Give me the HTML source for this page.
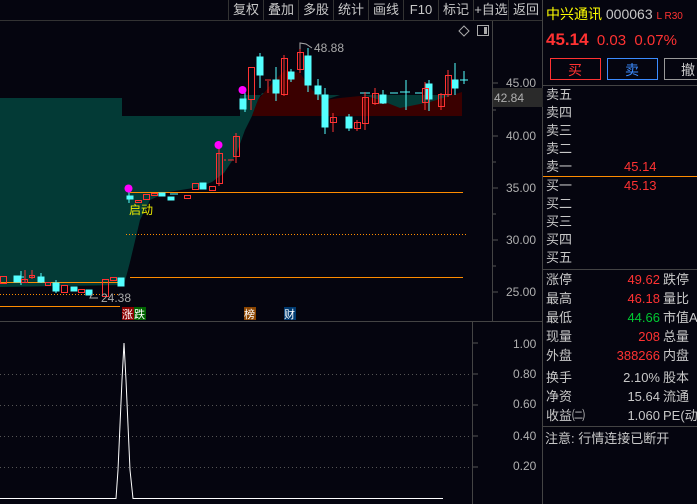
<!DOCTYPE html>
<html><head><meta charset="utf-8"><style>
*{margin:0;padding:0}
body{width:697px;height:504px;background:#05050f;overflow:hidden;position:relative;font-family:"Liberation Sans","Noto Sans CJK SC",sans-serif;}
.tb{position:absolute;top:0;height:20px;font-size:13px;color:#c8c8c8;line-height:20px;text-align:center;border-left:1px solid #333;}
.r{position:absolute;font-size:13px;line-height:18px;color:#c8c8c8;}
</style></head><body>
<svg width="697" height="504" style="position:absolute;left:0;top:0" font-family="Liberation Sans,Noto Sans CJK SC,sans-serif">
<line x1="0" y1="20.5" x2="543" y2="20.5" stroke="#333"/>
<path d="M0 98 H122 V116 H240 V95 H257 L262 95 H462 V116 H430 L400 112 L380 100 L362 95 L340 95 L325 100 L300 93 H262 L258 100 L252 116 L245 130 L236 155 L224 173 L212 182 L200 187 L168 192 L150 200 L140 220 L130 262 L124 285 L0 287 Z" fill="#033a36"/>
<path d="M262 95 L275 80 L285 70 L300 73 L312 90 L325 100 L340 98 L360 96 L380 100 L400 108 L430 102 L462 92 V116 H252 L258 100 Z" fill="#3a0000"/>
<line x1="130" y1="192.5" x2="463" y2="192.5" stroke="#ff8c00"/>
<line x1="126" y1="234.5" x2="467" y2="234.5" stroke="#ff8c00" stroke-dasharray="1,2"/>
<line x1="130" y1="277.5" x2="463" y2="277.5" stroke="#ff8c00"/>
<line x1="0" y1="282.5" x2="120" y2="282.5" stroke="#ff8c00"/>
<line x1="0" y1="294.5" x2="118" y2="294.5" stroke="#ff8c00" stroke-dasharray="1,2"/>
<line x1="0" y1="306.5" x2="120" y2="306.5" stroke="#ff8c00"/>
<g fill="#54ffff" stroke="#54ffff">
<rect x="14" y="276" width="6" height="6"/><rect x="38" y="277" width="6" height="5"/>
<rect x="53" y="283" width="6" height="8"/><rect x="71" y="287" width="6" height="4"/><rect x="86" y="290" width="6" height="5"/><rect x="118" y="278" width="6" height="8"/>
<rect x="127" y="196" width="6" height="3"/><rect x="159" y="193" width="6" height="3"/><rect x="168" y="197" width="6" height="3"/><rect x="200" y="183" width="6" height="6"/>
<rect x="240" y="99" width="6" height="10"/><rect x="257" y="57" width="6" height="18"/><rect x="273" y="80" width="6" height="13"/><rect x="288" y="72" width="6" height="7"/><rect x="305" y="56" width="6" height="29"/><rect x="315" y="86" width="6" height="8"/><rect x="322" y="95" width="6" height="32"/><rect x="346" y="117" width="6" height="11"/><rect x="380" y="95" width="6" height="8"/><rect x="426" y="84" width="6" height="15"/><rect x="452" y="80" width="6" height="8"/>
<path d="M21 271V285M41 273V283M56 280V293M129 190V203M245 90V112M260 53V88M276 67V101M291 69V82M308 48V92M318 79V100M325 88V134M349 114V131M383 90V104M406 80V110M429 80V111M455 63V95M464 71V84M18 277H24M460 80H468M400 92H410M390 93H398M360 93H370M415 93H422M170 194H178"/>
</g>
<g fill="none" stroke="#ff3232">
<rect x="0.5" y="276.5" width="6" height="7"/><rect x="21.5" y="279.5" width="6" height="3"/><rect x="29.5" y="275.5" width="5" height="2"/><rect x="45.5" y="282.5" width="5" height="3"/><rect x="61.5" y="285.5" width="6" height="7"/><rect x="78.5" y="289.5" width="6" height="3"/><rect x="102.5" y="279.5" width="6" height="17"/><rect x="110.5" y="277.5" width="6" height="3"/>
<rect x="135.5" y="200.5" width="6" height="2"/><rect x="143.5" y="194.5" width="6" height="5"/><rect x="151.5" y="193.5" width="6" height="2"/><rect x="184.5" y="195.5" width="6" height="3"/><rect x="192.5" y="183.5" width="6" height="6"/><rect x="209.5" y="186.5" width="6" height="4"/>
<rect x="216.5" y="153.5" width="6" height="30"/><rect x="233.5" y="136.5" width="6" height="20"/><rect x="248.5" y="67.5" width="6" height="32"/><rect x="281.5" y="58.5" width="6" height="36"/><rect x="297.5" y="52.5" width="6" height="17"/><rect x="330.5" y="117.5" width="6" height="5"/><rect x="354.5" y="122.5" width="6" height="6"/><rect x="362.5" y="97.5" width="6" height="26"/><rect x="372.5" y="93.5" width="6" height="10"/><rect x="422.5" y="88.5" width="6" height="14"/><rect x="438.5" y="94.5" width="6" height="12"/><rect x="445.5" y="75.5" width="6" height="19"/>
<path d="M25 270V283M32 270V279M219 145V186M236 133V163M251 99V110M284 55V96M300 44V73M333 113V132M357 120V131M365 92V130M375 88V105M425 82V110M441 93V110M448 70V97M268 81V93M265 80H271M228 160H234M224 160H226"/>
</g>
<path d="M92 294 L90 298 L98 298" stroke="#aaa" fill="none"/>
<text x="101" y="302" fill="#aaa" font-size="12">24.38</text>
<path d="M300 49 V43 L306 44 L312 48" stroke="#aaa" fill="none"/>
<text x="314" y="52" fill="#aaa" font-size="12">48.88</text>
<g fill="#ff00ff"><circle cx="128.5" cy="188.5" r="4"/><circle cx="218.5" cy="145" r="4"/><circle cx="242.5" cy="90" r="4"/></g>
<text x="129" y="214" fill="#e8e800" font-size="12">启动</text>
<path d="M464 26 L469 31 L464 36 L459 31 Z" stroke="#aaa" fill="none"/>
<rect x="477.5" y="25.5" width="11" height="10" stroke="#aaa" fill="none"/><rect x="484" y="27" width="3" height="7" fill="#aaa"/>
<rect x="122" y="307" width="12" height="13" fill="#8b0000"/><text x="122" y="318" fill="#fff" font-size="11">涨</text>
<rect x="134" y="307" width="12" height="13" fill="#006400"/><text x="134" y="318" fill="#fff" font-size="11">跌</text>
<rect x="244" y="307" width="12" height="13" fill="#8b4500"/><text x="244" y="318" fill="#fff" font-size="11">榜</text>
<rect x="284" y="307" width="12" height="13" fill="#003a70"/><text x="284" y="318" fill="#fff" font-size="11">财</text>
<line x1="492.5" y1="21" x2="492.5" y2="321" stroke="#444"/>
<line x1="0" y1="321.5" x2="543" y2="321.5" stroke="#444"/>
<line x1="472.5" y1="322" x2="472.5" y2="504" stroke="#444"/>
<line x1="542.5" y1="0" x2="542.5" y2="504" stroke="#444"/>
<g fill="#b0b0b0" font-size="12">
<text x="506" y="87">45.00</text><text x="506" y="140">40.00</text><text x="506" y="192">35.00</text><text x="506" y="244">30.00</text><text x="506" y="296">25.00</text>
<text x="513" y="348">1.00</text><text x="513" y="378">0.80</text><text x="513" y="408">0.60</text><text x="513" y="440">0.40</text><text x="513" y="470">0.20</text>
</g>
<g stroke="#555"><path d="M493 83H498M493 136H498M493 188H498M493 240H498M493 292H498M493 110H496M493 162H496M493 214H496M493 266H496M473 343H478M473 374H478M473 405H478M473 436H478M473 467H478"/></g>
<rect x="493" y="88" width="50" height="19" fill="#2a2a2a"/>
<text x="494" y="102" fill="#b0b0b0" font-size="12">42.84</text>
<g stroke="#555" stroke-dasharray="1,3"><path d="M0 374.5H472M0 405.5H472M0 436.5H472M0 467.5H472"/></g>
<path d="M0 498.5 H116 L118 470 L122 380 L124 343 L126 380 L130 470 L133 498.5 H443" stroke="#fff" fill="none"/>
<g stroke="#444"><path d="M543 85.5H697M543 269.5H697M543 426.5H697"/></g>
<line x1="543" y1="176.5" x2="697" y2="176.5" stroke="#ff8c00"/>
<rect x="550.5" y="58.5" width="50" height="21" stroke="#ff3232" fill="none"/>
<rect x="607.5" y="58.5" width="50" height="21" stroke="#3c8cff" fill="none"/>
<rect x="664.5" y="58.5" width="50" height="21" stroke="#999" fill="none"/>
<text x="568" y="75" fill="#ff3232" font-size="14">买</text>
<text x="625" y="75" fill="#3c8cff" font-size="14">卖</text>
<text x="681" y="75" fill="#ccc" font-size="14">撤</text>
</svg>
<div class="tb" style="left:228px;width:34px">复权</div>
<div class="tb" style="left:263px;width:34px">叠加</div>
<div class="tb" style="left:298px;width:34px">多股</div>
<div class="tb" style="left:333px;width:34px">统计</div>
<div class="tb" style="left:368px;width:34px">画线</div>
<div class="tb" style="left:403px;width:34px">F10</div>
<div class="tb" style="left:438px;width:34px">标记</div>
<div class="tb" style="left:473px;width:34px">+自选</div>
<div class="tb" style="left:508px;width:34px">返回</div>
<div class="r" style="left:546px;top:5px;font-size:14px"><span style="color:#ffff00">中兴通讯</span> <span style="color:#c8c8c8">000063</span> <span style="color:#ff3232;font-size:10px">L R30</span></div>
<div class="r" style="left:546px;top:31px;font-size:15px;color:#ff3232"><b style="font-size:17px">45.14</b>&nbsp; 0.03 &nbsp;0.07%</div>
<div class="r" style="left:546px;top:86px;line-height:18px">卖五<br>卖四<br>卖三<br>卖二<br>卖一</div>
<div class="r" style="left:624px;top:158px;color:#ff3232">45.14</div>
<div class="r" style="left:546px;top:177px;line-height:18px">买一<br>买二<br>买三<br>买四<br>买五</div>
<div class="r" style="left:624px;top:177px;color:#ff3232">45.13</div>
<div class="r" style="left:546px;top:270px;line-height:19px">涨停<br>最高<br>最低<br>现量<br>外盘</div>
<div class="r" style="left:560px;width:100px;top:270px;line-height:19px;text-align:right"><span style="color:#ff3232">49.62</span><br><span style="color:#ff3232">46.18</span><br><span style="color:#00c832">44.66</span><br><span style="color:#ff3232">208</span><br><span style="color:#ff3232">388266</span></div>
<div class="r" style="left:663px;top:270px;line-height:19px;white-space:nowrap">跌停<br>量比<br>市值A<br>总量<br>内盘</div>
<div class="r" style="left:546px;top:368px;line-height:19px">换手<br>净资<br>收益㈡</div>
<div class="r" style="left:560px;width:100px;top:368px;line-height:19px;text-align:right">2.10%<br>15.64<br>1.060</div>
<div class="r" style="left:663px;top:368px;line-height:19px;white-space:nowrap">股本<br>流通<br>PE(动</div>
<div class="r" style="left:545px;top:430px;white-space:nowrap">注意: 行情连接已断开</div>
</body></html>
